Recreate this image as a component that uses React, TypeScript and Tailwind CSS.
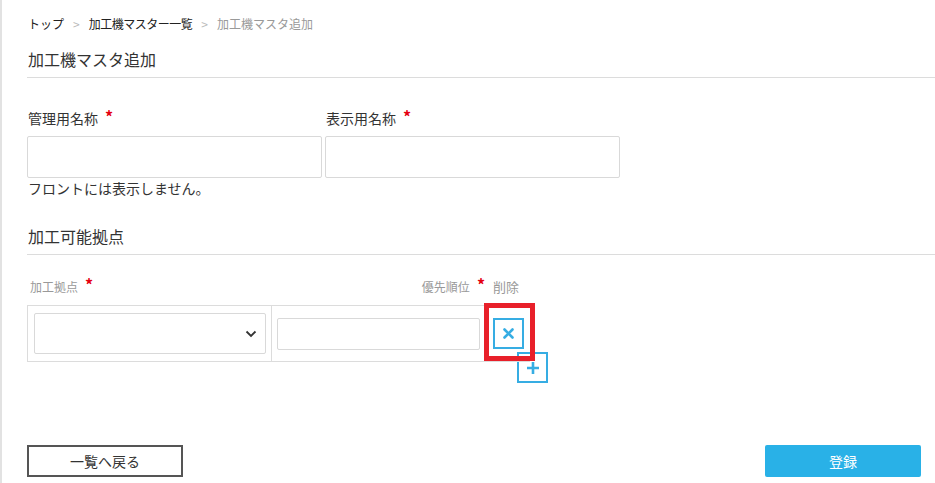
import React from "react";

const Req = () => (
  <span className="relative top-[-1px] ml-[7px] text-[16px] font-bold leading-none text-[#e50012]">*</span>
);

export default function App() {
  return (
    <div className="min-h-[483px] border-l-2 border-[#e2e2e2] bg-white pl-[25px] font-['Noto_Sans_CJK_JP',sans-serif] text-[#333]">
      {/* breadcrumb */}
      <div className="flex items-center pl-[1px] pt-[15px] text-[12px] leading-[18px]">
        <span className="text-[#222]">トップ</span>
        <span className="mx-[9px] text-[#bbb]">&gt;</span>
        <span className="tracking-[-0.5px] text-[#222]">加工機マスター一覧</span>
        <span className="mx-[9px] text-[#bbb]">&gt;</span>
        <span className="text-[#999]">加工機マスタ追加</span>
      </div>

      {/* title */}
      <div className="mt-[14px] border-b border-[#dcdcdc] pb-[6px] pl-[1px] text-[16px] leading-[24px] text-[#333]">
        加工機マスタ追加
      </div>

      {/* names */}
      <div className="mt-[30px] flex gap-[3px]">
        <div className="w-[295px]">
          <div className="pl-[1px] text-[14px] leading-[20px]">
            管理用名称
            <Req />
          </div>
          <input className="mt-[8px] h-[42px] w-[295px] rounded-[2px] border border-[#d9d9d9] bg-white outline-none" />
        </div>
        <div className="w-[295px]">
          <div className="pl-[1px] text-[14px] leading-[20px]">
            表示用名称
            <Req />
          </div>
          <input className="mt-[8px] h-[42px] w-[295px] rounded-[2px] border border-[#d9d9d9] bg-white outline-none" />
        </div>
      </div>
      <div className="pl-[1px] text-[14px] leading-[20px] text-[#333]">フロントには表示しません。</div>

      {/* section */}
      <div className="mt-[26px] border-b border-[#dcdcdc] pb-[6px] pl-[1px] text-[16px] leading-[24px] text-[#333]">
        加工可能拠点
      </div>

      {/* table header */}
      <div className="mt-[22px] flex text-[12px] leading-[20px] text-[#999]">
        <div className="w-[245px] pl-[3px]">
          加工拠点
          <Req />
        </div>
        <div className="w-[215px] pr-[2px] text-right">
          優先順位
          <Req />
        </div>
        <div className="pl-[6px] text-[13px]">削除</div>
      </div>

      {/* table row */}
      <div className="relative mt-[8px] flex w-[503px] border-y border-[#dcdcdc]">
        <div className="w-[245px] border-x border-[#dcdcdc] px-[6px] py-[7px]">
          <div className="flex h-[41px] w-[232px] items-center justify-end rounded-[2px] border border-[#d9d9d9] pr-[8px]">
            <svg width="12" height="8" viewBox="0 0 12 8">
              <path d="M1.5 1.5 L6 6 L10.5 1.5" fill="none" stroke="#333" strokeWidth="1.8" />
            </svg>
          </div>
        </div>
        <div className="flex w-[215px] items-center pl-[5px]">
          <div className="h-[32px] w-[203px] rounded-[2px] border border-[#d9d9d9]" />
        </div>
        <div className="flex items-center pl-[6px]">
          <button className="flex h-[31px] w-[31px] items-center justify-center border-2 border-[#36ade3] bg-white">
            <svg width="11" height="11" viewBox="0 0 11 11">
              <path d="M1.5 1.5 L9.5 9.5 M9.5 1.5 L1.5 9.5" stroke="#36ade3" strokeWidth="2.6" strokeLinecap="round" />
            </svg>
          </button>
        </div>
        <div className="pointer-events-none absolute left-[457px] top-[-3px] h-[58px] w-[51px] border-[5px] border-[#e8202a]" />
      </div>

      {/* add */}
      <div className="mt-[-10px] pl-[490px]">
        <button className="flex h-[31px] w-[31px] items-center justify-center border-2 border-[#36ade3] bg-white">
          <svg width="14" height="14" viewBox="0 0 14 14">
            <path d="M7 1 V13 M1 7 H13" stroke="#36ade3" strokeWidth="2.6" />
          </svg>
        </button>
      </div>

      {/* footer buttons */}
      <div className="mt-[62px] flex justify-between pr-[14px]">
        <button className="h-[32px] w-[156px] border-2 border-[#555] bg-white text-[14px] text-[#333]">一覧へ戻る</button>
        <button className="h-[32px] w-[156px] rounded-[2px] bg-[#29b1e7] text-[14px] text-white">登録</button>
      </div>
    </div>
  );
}
